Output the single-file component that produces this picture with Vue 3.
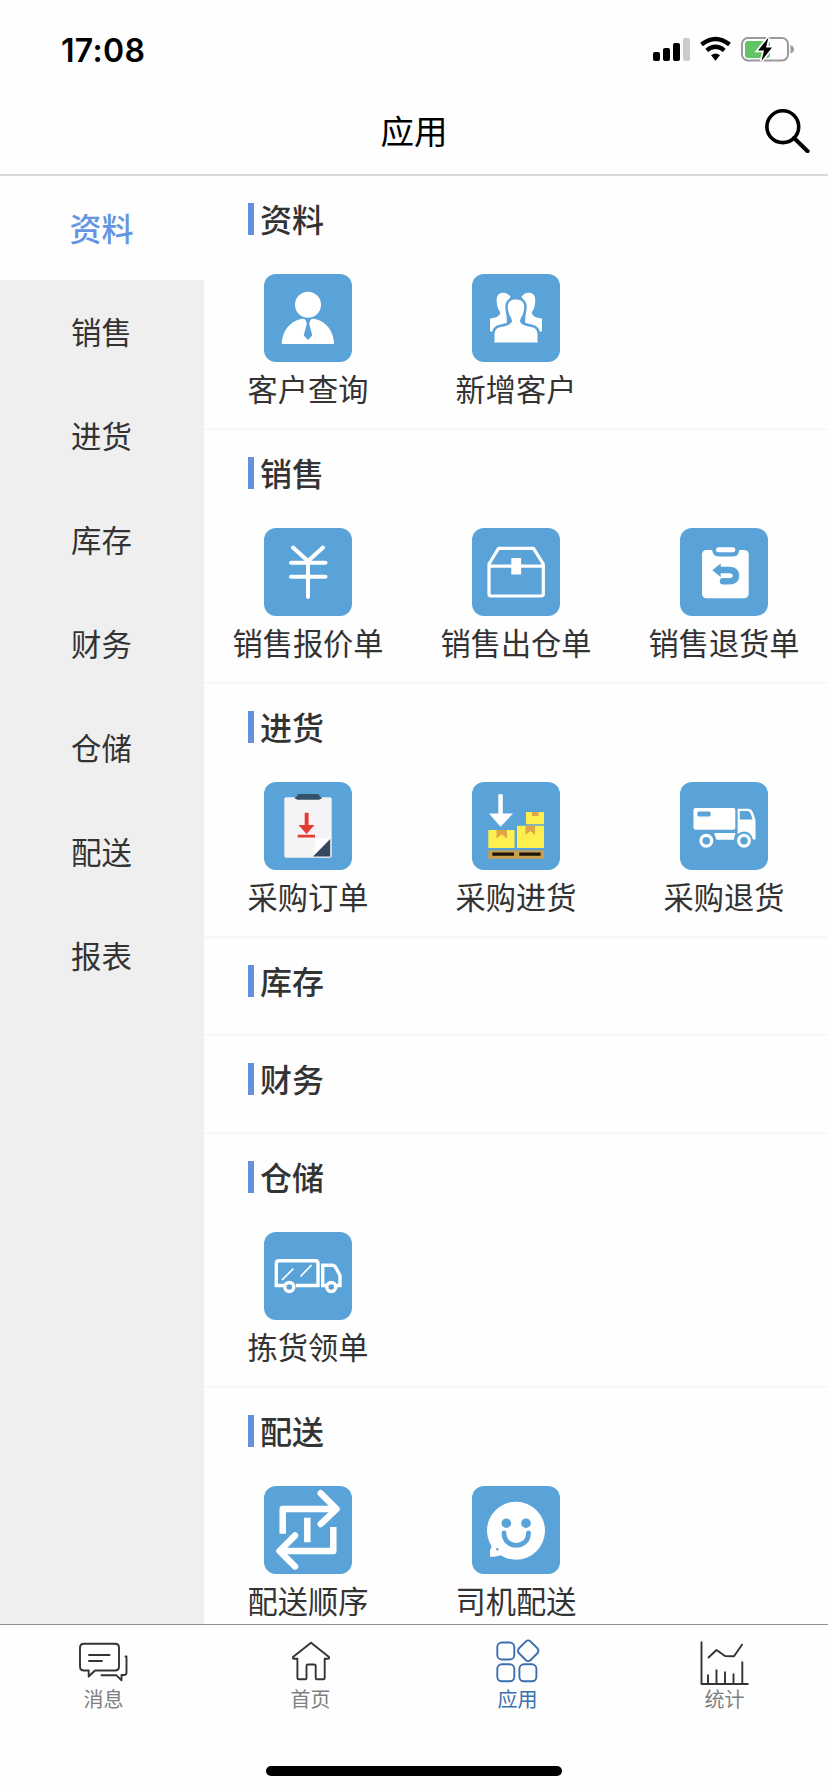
<template>
  <div class="page">
    <div class="status-bar">
      <span class="time">17:08</span>
      <svg class="status-icons" width="142" height="28" viewBox="0 0 142 28">
        <rect x="0" y="16" width="7" height="9" rx="2" />
        <rect x="10" y="12" width="7" height="13" rx="2" />
        <rect x="20" y="7" width="7" height="18" rx="2" />
        <rect x="30" y="2" width="7" height="23" rx="2" fill="#ccc" />
        <path d="M48.5 8.5 Q62.5 -2.5 76.5 8.5" fill="none" stroke="#000" stroke-width="4.4" />
        <path d="M53.7 14.3 Q62.5 7.2 71.3 14.3" fill="none" stroke="#000" stroke-width="4.2" />
        <path d="M58 19.2 Q62.5 15.6 67 19.2 L62.5 24.8 Z" />
        <rect x="89" y="2" width="46" height="22.5" rx="6" fill="none" stroke="#9a9a9a" stroke-width="2" />
        <rect x="92" y="5" width="25" height="17" rx="3" fill="#63c466" />
        <path d="M137.5 9 Q141 10.5 141 13.2 Q141 16 137.5 17.5 Z" fill="#9a9a9a" />
        <path d="M115.5 1.5 L105 14.5 H111 L108.5 25 L119 11.5 H113 Z" stroke="#fff" stroke-width="3.4" paint-order="stroke" />
      </svg>
    </div>

    <div class="header">
      <h1>应用</h1>
      <svg class="search" width="48" height="48" viewBox="0 0 48 48" fill="none" stroke="#000">
        <circle cx="20.8" cy="21.7" r="15.9" stroke-width="3.6" />
        <path d="M32 33 L45.6 46.2" stroke-width="4" stroke-linecap="round" />
      </svg>
    </div>

    <div class="main">
      <div class="sidebar">
        <div
          v-for="(item, index) in menu"
          :key="item"
          class="menu-item"
          :class="{ active: index === current }"
          @click="current = index"
        >{{ item }}</div>
      </div>

      <div class="content">
        <div v-for="section in sections" :key="section.title" class="section">
          <h2>{{ section.title }}</h2>
          <div v-if="section.apps.length" class="apps">
            <div v-for="app in section.apps" :key="app.name" class="app">
              <svg class="app-icon" viewBox="0 0 88 88" fill="#fff">
                <g v-if="app.icon === 'customer'">
                  <circle cx="44" cy="30.8" r="13" />
                  <path d="M17.8 70 C18 57 27 45.5 39.5 44.7 L44 46.5 L48.5 44.7 C61 45.5 70 57 70.2 70 Z" />
                  <path d="M41 45 H47 L45.2 49.5 L48.3 61.5 L44 66 L39.7 61.5 L42.8 49.5 Z" fill="#5aa3d9" />
                </g>
                <g v-else-if="app.icon === 'group'">
                  <path d="M18 57.5 V44.5 Q26 44 28.2 39.5 Q28.4 38 26 34.5 C23.5 26 24 18.7 31.5 18.7 Q36 18.7 38.5 23 L34 34 L35 50 Q24 51.5 21 57.5 Z" />
                  <path d="M70 57.5 V44.5 Q62 44 59.8 39.5 Q59.6 38 62 34.5 C64.5 26 64 18.7 56.5 18.7 Q52 18.7 49.5 23 L54 34 L53 50 Q64 51.5 67 57.5 Z" />
                  <path
                    d="M22.5 68.5 V60 Q22.5 54 29 53 Q39 51 40 47.5 Q40.2 45 37.5 41 C34 32 35.5 25.5 44 25.5 C52.5 25.5 54 32 50.5 41 Q47.8 45 48 47.5 Q49 51 59 53 Q65.5 54 65.5 60 V68.5 Z"
                    stroke="#5aa3d9"
                    stroke-width="5"
                    paint-order="stroke"
                  />
                </g>
                <g v-else-if="app.icon === 'yen'" fill="none" stroke="#fff" stroke-width="4" stroke-linecap="round">
                  <path d="M29 19.5 L44 33 L59 19.5 M27 34.8 H61.5 M27 48.7 H61.5 M44 33 V69" />
                </g>
                <g v-else-if="app.icon === 'box'">
                  <path d="M26.5 20.3 H61.5 L71.3 36 V66 Q71.3 68 69 68 H19 Q17 68 17 66 V36 Z M17 38.2 H71.3" fill="none" stroke="#fff" stroke-width="3.2" stroke-linejoin="round" />
                  <rect x="39.3" y="30" width="9.8" height="16.5" />
                </g>
                <g v-else-if="app.icon === 'return'">
                  <rect x="22" y="22" width="46.7" height="48.3" rx="4.5" />
                  <path d="M32 21 H59.5 Q59 28.5 53 28.5 H38.5 Q32.5 28.5 32 21 Z" fill="#5aa3d9" />
                  <rect x="36" y="19.3" width="19.3" height="5" rx="2.5" />
                  <path d="M38 42 H49 Q56 42 56 47.8 Q56 53.3 49 53.3 H43" fill="none" stroke="#5aa3d9" stroke-width="6.4" stroke-linecap="round" />
                  <path d="M32.3 42.3 L40.7 35.5 V49 Z" fill="#5aa3d9" />
                </g>
                <g v-else-if="app.icon === 'order'">
                  <rect x="20.3" y="15.3" width="47.4" height="60.4" rx="2" fill="#f4f4f6" />
                  <path d="M30 16 L33 14.5 V13.5 Q33 12 35 12 H53.5 Q55.5 12 55.5 13.5 V14.5 L58.5 16 L55 17.7 H33.5 Z" fill="#34536b" />
                  <path d="M40.7 30.7 H44.6 V43 H50.5 L42.6 52 L34.5 43 H40.7 Z M33.7 52.8 H51 V55.4 H33.7 Z" fill="#e53b32" />
                  <path d="M49 74.7 L52 57 L67 56.5 Z" fill="#fff" />
                  <path d="M49 74.5 L66.2 57 V74.5 Z" fill="#34495e" />
                </g>
                <g v-else-if="app.icon === 'stock'">
                  <path d="M26.3 12.3 H30.8 V31.5 H41 L28.6 44.7 L17 31.5 H26.3 Z" />
                  <path d="M16.3 48 H42.6 V66 H16.3 Z M45 43.7 H72 V66 H45 Z M54 30 H72 V42.3 H54 Z" fill="#fdf04e" />
                  <path d="M24.5 48 H35 V56.5 L29.7 52.5 L24.5 56.5 Z M53.5 43.7 H63 V53 L58.3 49 L53.5 53 Z M60 30 H66.5 V34 H60 Z" fill="#dfa548" />
                  <rect x="16.3" y="68.3" width="55.7" height="8.5" fill="#c79e52" />
                  <path d="M20.3 70.6 H42 V73.8 H20.3 Z M47.3 70.6 H68.6 V73.8 H47.3 Z" fill="#1c1408" />
                </g>
                <g v-else-if="app.icon === 'truck'">
                  <rect x="13.5" y="26" width="41.8" height="21.7" rx="2" />
                  <rect x="17.3" y="29.5" width="13.3" height="5" rx="1.5" fill="#5aa3d9" />
                  <path d="M57.6 26.7 H68 Q71.5 26.7 73 30.5 L75.5 38 V57.5 H73 Q71 49.5 64 49.5 Q60.5 49.5 57.6 52 Z" />
                  <path d="M59.8 29 H67.5 Q69.5 29 70.8 32 L72.6 37.6 H59.8 Z" fill="#5aa3d9" />
                  <path d="M34 51 H55.5 L53.8 57.8 H36.5 Z" />
                  <circle cx="26.3" cy="58.7" r="5.4" fill="none" stroke="#fff" stroke-width="3.2" />
                  <circle cx="64" cy="58.7" r="5.4" fill="none" stroke="#fff" stroke-width="3.2" />
                </g>
                <g v-else-if="app.icon === 'picking'" fill="none" stroke="#fff" stroke-width="3.4">
                  <path d="M20 53.5 H12.3 V31.5 Q12.3 28.8 15 28.8 H51.3 Q54 28.8 54 31.5 V53.5 H32" />
                  <path d="M62 53.5 H58.7 V33.2 H68 Q70.5 33.2 72 36 L76 43.5 V53.5 H73" />
                  <circle cx="25.3" cy="55" r="4.5" />
                  <circle cx="67.3" cy="55" r="4.5" />
                  <path d="M18 48 L29.5 36.5 M36.5 44.5 L47.5 33" stroke-width="1.7" />
                </g>
                <g v-else-if="app.icon === 'swap'" fill="none" stroke="#fff" stroke-width="6.5" stroke-linejoin="round">
                  <path d="M18.7 47.8 V23 H70 M69.3 41 V65 H18 M43.3 31.7 V56.3" />
                  <path d="M56.7 7.2 L72.5 23 L56.7 38" stroke-linecap="round" />
                  <path d="M31 49.5 L15.5 65 L31 80.5" stroke-linecap="round" />
                </g>
                <g v-else-if="app.icon === 'driver'">
                  <circle cx="44" cy="44.7" r="29" />
                  <path d="M20 57 Q20 62 18 64.5 V70.8 Q26 71 31 68 Z" />
                  <circle cx="34.3" cy="37.2" r="4.8" fill="#5aa3d9" />
                  <circle cx="54" cy="37.2" r="4.8" fill="#5aa3d9" />
                  <path d="M32 47 C32 63.5 56.5 63.5 56.5 47" fill="none" stroke="#5aa3d9" stroke-width="4.8" stroke-linecap="round" />
                  <circle cx="25.3" cy="63.3" r="1.2" fill="#8a97a3" />
                </g>
              </svg>
              <span class="app-name">{{ app.name }}</span>
            </div>
          </div>
        </div>
      </div>
    </div>

    <div class="tab-bar">
      <div v-for="tab in tabs" :key="tab.name" class="tab" :class="{ active: tab.name === '应用' }">
        <svg class="tab-icon" width="50" height="50" viewBox="0 0 50 50" fill="none" stroke="currentColor" stroke-width="1.9" stroke-linejoin="round" stroke-linecap="round">
          <g v-if="tab.icon === 'message'">
            <path d="M5 5.7 H36 Q40 5.7 40 9.7 V28.5 Q40 32.5 36 32.5 H16 L9.7 38.5 V32.5 H5 Q1 32.5 1 28.5 V9.7 Q1 5.7 5 5.7 Z" />
            <path d="M10 17 H30.5 M10 23 H23" />
            <path d="M46.5 18.5 H47.5 V34.5 Q47.5 37 45 37 H42.5 V42.3 L37.5 37.3 H22.5" />
          </g>
          <g v-else-if="tab.icon === 'home'">
            <path d="M25 4.7 L43 19 Q43.5 20.7 42 20.7 H38.7 V40 Q38.7 41.3 37.4 41.3 H31 Q29.7 41.3 29.7 40 V28 Q29.7 26.5 28.2 26.5 H22 Q20.5 26.5 20.5 28 V40 Q20.5 41.3 19.2 41.3 H12.7 Q11.4 41.3 11.4 40 V20.7 H8 Q6.5 20.7 7 19 Z" />
          </g>
          <g v-else-if="tab.icon === 'apps'">
            <rect x="4.3" y="4.5" width="17" height="17" rx="4.5" />
            <rect x="4.3" y="26.3" width="17" height="17" rx="4.5" />
            <rect x="26.4" y="26.3" width="17" height="17" rx="4.5" />
            <rect x="27" y="4.5" width="16.5" height="16.5" rx="3.5" transform="rotate(45 35.2 12.7)" />
          </g>
          <g v-else stroke-linecap="butt">
            <path d="M1.5 3.5 V46 H48.5" />
            <path d="M8 20 L16.5 12 L25 18 L34 18.3 L42.5 6" />
            <path d="M8 46 V36.5 M16.5 46 V31.5 M25 46 V33.5 M33.5 46 V35.5 M42.3 46 V23.5" />
          </g>
        </svg>
        <span>{{ tab.name }}</span>
      </div>
    </div>
    <div class="home-indicator"></div>
  </div>
</template>

<script setup>
import { ref } from 'vue';

const current = ref(0);

const menu = ['资料', '销售', '进货', '库存', '财务', '仓储', '配送', '报表'];

const sections = [
  {
    title: '资料',
    apps: [
      { name: '客户查询', icon: 'customer' },
      { name: '新增客户', icon: 'group' },
    ],
  },
  {
    title: '销售',
    apps: [
      { name: '销售报价单', icon: 'yen' },
      { name: '销售出仓单', icon: 'box' },
      { name: '销售退货单', icon: 'return' },
    ],
  },
  {
    title: '进货',
    apps: [
      { name: '采购订单', icon: 'order' },
      { name: '采购进货', icon: 'stock' },
      { name: '采购退货', icon: 'truck' },
    ],
  },
  { title: '库存', apps: [] },
  { title: '财务', apps: [] },
  { title: '仓储', apps: [{ name: '拣货领单', icon: 'picking' }] },
  {
    title: '配送',
    apps: [
      { name: '配送顺序', icon: 'swap' },
      { name: '司机配送', icon: 'driver' },
    ],
  },
];

const tabs = [
  { name: '消息', icon: 'message' },
  { name: '首页', icon: 'home' },
  { name: '应用', icon: 'apps' },
  { name: '统计', icon: 'chart' },
];
</script>

<style>
body {
  margin: 0;
  background: #fff;
}
</style>

<style scoped>
.page {
  display: flex;
  flex-direction: column;
  width: 828px;
  height: 1792px;
  overflow: hidden;
  background: #fefefe;
  color: #333;
  font-family: "Noto Sans CJK SC", sans-serif;
}

.status-bar {
  display: flex;
  justify-content: space-between;
  align-items: center;
  box-sizing: border-box;
  height: 88px;
  padding: 12px 33px 0 61px;
  flex: none;
}

.time {
  font-family: Inter, sans-serif;
  font-size: 32px;
  font-weight: 600;
  letter-spacing: 0.3px;
  color: #000;
}

.header {
  display: grid;
  grid-template-columns: 1fr auto 1fr;
  align-items: center;
  box-sizing: border-box;
  height: 88px;
  padding: 0 18px 4px 0;
  border-bottom: 2px solid #d9d9d9;
  flex: none;
}

.header h1 {
  grid-column: 2;
  margin: 0 0 0 18px;
  padding-top: 1px;
  font-size: 33.5px;
  line-height: 48px;
  font-weight: 400;
  color: #000;
}

.search {
  justify-self: end;
}

.main {
  display: flex;
  flex: 1;
  min-height: 0;
  overflow: hidden;
}

.sidebar {
  width: 204px;
  background: #efefef;
  flex: none;
}

.menu-item {
  box-sizing: border-box;
  height: 104px;
  line-height: 102px;
  padding-right: 1px;
  text-align: center;
  font-size: 30.4px;
}

.menu-item.active {
  background: #fefefe;
  color: #6495e0;
  font-size: 32px;
  font-weight: 500;
}

.content {
  flex: 1;
}

.section {
  box-sizing: border-box;
  min-height: 98px;
  padding-top: 27px;
  border-bottom: 2px solid #f7f7f7;
}

.section h2 {
  height: 32px;
  margin: 0 0 0 44px;
  padding-left: 6px;
  border-left: 6px solid #6490e0;
  font-size: 32px;
  line-height: 30px;
  font-weight: 500;
}

.apps {
  display: grid;
  grid-template-columns: repeat(3, 208px);
  height: 154px;
  padding-top: 39px;
}

.app {
  display: flex;
  flex-direction: column;
  align-items: center;
}

.app-icon {
  width: 88px;
  height: 88px;
  border-radius: 12px;
  background: #5aa3d9;
  flex: none;
}

.app-name {
  margin-top: 6px;
  font-size: 30.2px;
  line-height: 40px;
  white-space: nowrap;
}

.section:last-child {
  border-bottom: none;
}

.tab-bar {
  display: flex;
  box-sizing: border-box;
  height: 142px;
  padding-top: 13px;
  border-top: 1px solid #8f8f8f;
  flex: none;
}

.tab {
  display: flex;
  flex: 1;
  flex-direction: column;
  align-items: center;
  font-size: 20px;
  line-height: 22px;
}

.tab-icon {
  color: #333;
}

.tab span {
  color: #808080;
}

.tab.active .tab-icon,
.tab.active span {
  color: #3a70ae;
}

.home-indicator {
  width: 296px;
  height: 10px;
  margin: 0 auto 16px;
  border-radius: 5px;
  background: #000;
  flex: none;
}
</style>
